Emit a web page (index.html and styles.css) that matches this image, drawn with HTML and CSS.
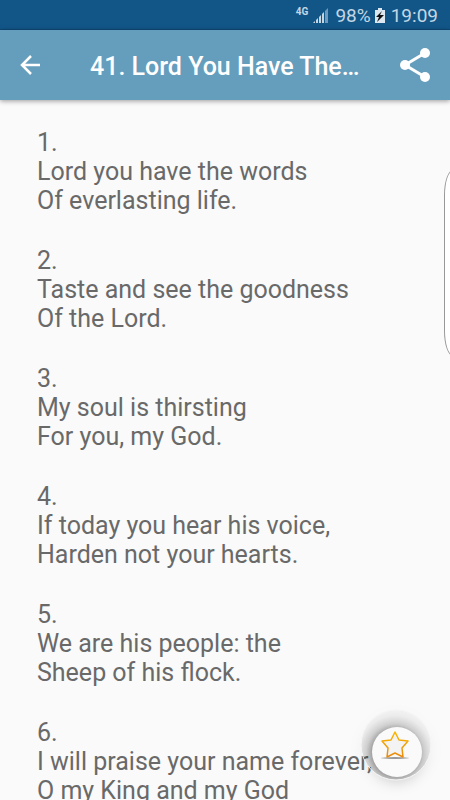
FILE: index.html
```html
<!DOCTYPE html>
<html lang="en">
<head>
    <meta charset="UTF-8">
    <meta name="viewport" content="width=device-width, initial-scale=1.0">
    <title>41. Lord You Have The Words</title>
    <link rel="stylesheet" href="styles.css">
</head>
<body>

    <div class="status-bar">
        <span class="network">4G</span>
        <svg class="signal" width="16" height="16" viewBox="0 0 16 16">
            <path d="M0 15h2v-2L0 15zM3 15h2v-5l-2 2zM6 15h2V7L6 9zM9 15h2V4L9 6z" fill="#c3d6e4"/>
            <path d="M12 15h3V0l-3 3z" fill="#6f9abb"/>
        </svg>
        <span class="battery-level">98%</span>
        <svg class="battery" width="10" height="15" viewBox="0 0 10 15">
            <path d="M3 0h4v2h3v13H0V2h3z" fill="#dce7ef"/>
            <path d="M7 3L1 9h3l-2 5 7-7H5z" fill="#111"/>
        </svg>
        <span class="clock">19:09</span>
    </div>

    <header class="toolbar">
        <button type="button" class="icon-button" aria-label="Back">
            <svg width="20" height="20" viewBox="0 0 20 20" fill="none" stroke="#fff" stroke-width="2.5">
                <path d="M20 10H2M11 1l-9 9 9 9"/>
            </svg>
        </button>
        <h1 class="title">41. Lord You Have The Words</h1>
        <button type="button" class="icon-button" aria-label="Share">
            <svg width="30" height="34" viewBox="0 0 30 34">
                <path d="M25 5L5 17l20 12" fill="none" stroke="#fff" stroke-width="3"/>
                <circle cx="25" cy="5" r="5" fill="#fff"/>
                <circle cx="5" cy="17" r="5" fill="#fff"/>
                <circle cx="25" cy="29" r="5" fill="#fff"/>
            </svg>
        </button>
    </header>

    <main class="lyrics">
        <p>1.<br>Lord you have the words<br>Of everlasting life.</p>
        <p>2.<br>Taste and see the goodness<br>Of the Lord.</p>
        <p>3.<br>My soul is thirsting<br>For you, my God.</p>
        <p>4.<br>If today you hear his voice,<br>Harden not your hearts.</p>
        <p>5.<br>We are his people: the<br>Sheep of his flock.</p>
        <p>6.<br>I will praise your name forever,<br>O my King and my God</p>
    </main>

    <div class="edge-handle"></div>

    <button type="button" class="favorite" aria-label="Add to favorites">
        <svg width="72" height="72" viewBox="0 0 72 72">
            <defs>
                <radialGradient id="halo" gradientUnits="userSpaceOnUse" cx="35" cy="43" r="40">
                    <stop offset="0.55" stop-color="#000" stop-opacity="0.32"/>
                    <stop offset="0.72" stop-color="#000" stop-opacity="0.14"/>
                    <stop offset="0.9" stop-color="#000" stop-opacity="0.05"/>
                    <stop offset="1" stop-color="#000" stop-opacity="0.03"/>
                </radialGradient>
                <linearGradient id="gold" x1="0" y1="0" x2="0" y2="1">
                    <stop offset="0" stop-color="#fbb800"/>
                    <stop offset="1" stop-color="#e88a10"/>
                </linearGradient>
                <radialGradient id="ground">
                    <stop offset="0" stop-color="#777"/>
                    <stop offset="1" stop-color="#bbb"/>
                </radialGradient>
            </defs>
            <circle cx="36" cy="36" r="35" fill="url(#halo)" stroke="#f4f4f4"/>
            <circle cx="37" cy="43" r="25" fill="#fafafa"/>
            <ellipse cx="35" cy="49" rx="14" ry="1" fill="url(#ground)"/>
            <path d="M35 23l4 8 9 1-6 7 1 9-8-4-8 4 1-9-6-7 9-1z" fill="#f3f3f3" stroke="url(#gold)" stroke-width="1.5" stroke-linejoin="round"/>
        </svg>
    </button>

</body>
</html>
```

FILE: styles.css
```css
* {
    box-sizing: border-box;
}

body {
    font-family: Roboto, sans-serif;
    display: flex;
    flex-direction: column;
    height: 100vh;
    margin: 0;
    overflow: hidden;
    position: relative;
    background-color: #fafafa;
    color: #696969;
}

.status-bar {
    display: flex;
    flex: none;
    align-items: center;
    justify-content: flex-end;
    height: 30px;
    padding: 2px 12px 0;
    background-color: #125688;
    border-bottom: 1px solid #0d4a78;
    color: #c3d6e4;
    font-size: 19px;
}

.network {
    align-self: flex-start;
    margin: 4px 5px 0 0;
    font-size: 10px;
    font-weight: bold;
}

.signal {
    margin-right: 6px;
}

.battery {
    margin: 0 6px 0 4px;
}

.toolbar {
    display: flex;
    flex: none;
    align-items: center;
    height: 70px;
    padding: 0 20px;
    background-color: #659dbd;
    box-shadow: 0 1px 5px rgba(0, 0, 0, 0.4);
    z-index: 1;
}

.title {
    flex: 1;
    margin: 0 36px 0 50px;
    padding-top: 3px;
    overflow: hidden;
    color: #fff;
    font-size: 25px;
    font-weight: 500;
    line-height: 29px;
    text-overflow: ellipsis;
    white-space: nowrap;
}

.icon-button {
    display: flex;
    padding: 0;
    background: none;
    border: none;
    cursor: pointer;
}

.lyrics {
    flex: 1;
    padding: 28px 37px 0;
    overflow-y: auto;
    scrollbar-width: none;
    font-size: 25px;
    line-height: 29px;
}

.lyrics p {
    margin: 0 0 31px;
    white-space: nowrap;
}

.edge-handle {
    position: absolute;
    top: 170px;
    right: -12px;
    width: 18px;
    height: 186px;
    background-color: #fff;
    border: 1px solid #999;
    border-radius: 10px / 28px;
}

.favorite {
    position: absolute;
    right: 18px;
    bottom: 19px;
    display: flex;
    padding: 0;
    background: none;
    border: none;
    border-radius: 50%;
    filter: drop-shadow(0 5px 6px rgba(0, 0, 0, 0.15));
    cursor: pointer;
}
```
